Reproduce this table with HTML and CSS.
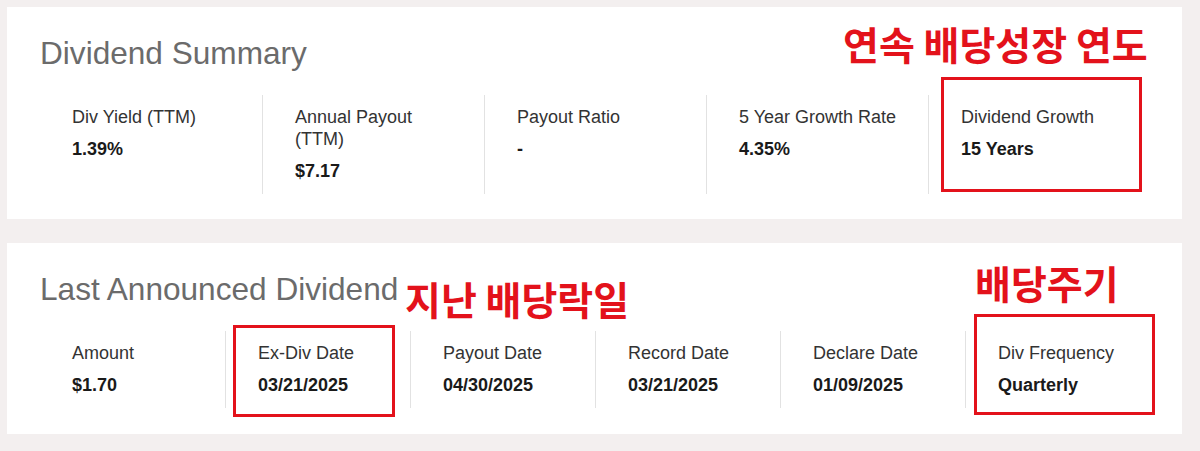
FILE: index.html
```html
<!DOCTYPE html>
<html lang="en">

<head>
    <meta charset="UTF-8">
    <meta name="viewport" content="width=device-width, initial-scale=1.0">
    <title>Dividend</title>
    <link rel="stylesheet" href="styles.css">
</head>

<body>

    <div class="card">
        <h2 class="card-title">Dividend Summary</h2>
        <div class="stats summary">
            <div class="stat">
                <div class="stat-label">Div Yield (TTM)</div>
                <div class="stat-value">1.39%</div>
            </div>
            <div class="stat">
                <div class="stat-label">Annual Payout (TTM)</div>
                <div class="stat-value">$7.17</div>
            </div>
            <div class="stat">
                <div class="stat-label">Payout Ratio</div>
                <div class="stat-value">-</div>
            </div>
            <div class="stat">
                <div class="stat-label">5 Year Growth Rate</div>
                <div class="stat-value">4.35%</div>
            </div>
            <div class="stat">
                <div class="stat-label">Dividend Growth</div>
                <div class="stat-value">15 Years</div>
            </div>
        </div>
        <span class="note note-growth">연속 배당성장 연도</span>
        <span class="mark mark-growth"></span>
    </div>

    <div class="card">
        <h2 class="card-title">Last Announced Dividend</h2>
        <div class="stats announced">
            <div class="stat">
                <div class="stat-label">Amount</div>
                <div class="stat-value">$1.70</div>
            </div>
            <div class="stat">
                <div class="stat-label">Ex-Div Date</div>
                <div class="stat-value">03/21/2025</div>
            </div>
            <div class="stat">
                <div class="stat-label">Payout Date</div>
                <div class="stat-value">04/30/2025</div>
            </div>
            <div class="stat">
                <div class="stat-label">Record Date</div>
                <div class="stat-value">03/21/2025</div>
            </div>
            <div class="stat">
                <div class="stat-label">Declare Date</div>
                <div class="stat-value">01/09/2025</div>
            </div>
            <div class="stat">
                <div class="stat-label">Div Frequency</div>
                <div class="stat-value">Quarterly</div>
            </div>
        </div>
        <span class="note note-exdiv">지난 배당락일</span>
        <span class="mark mark-exdiv"></span>
        <span class="note note-freq">배당주기</span>
        <span class="mark mark-freq"></span>
    </div>

</body>

</html>
```

FILE: styles.css
```css
body {
    margin: 0;
    padding: 7px 18px 16px 7px;
    background-color: #f3efef;
    font-family: "Liberation Sans", Arial, sans-serif;
}

.card {
    position: relative;
    background-color: #fff;
    padding: 28px 31px 25px 33px;
}

.card + .card {
    margin-top: 24px;
    padding-bottom: 26px;
}

.card-title {
    margin: 0 0 24px;
    font-size: 31.6px;
    font-weight: normal;
    line-height: 36px;
    color: #6b6b6b;
}

.stats {
    display: grid;
}

.summary {
    grid-template-columns: repeat(5, 222px);
}

.announced {
    grid-template-columns: repeat(6, 185px);
}

.stat {
    padding: 11px 24px 12px 32px;
}

.stat + .stat {
    border-left: 1px solid #e2e2e2;
}

.stat-label {
    font-size: 18px;
    line-height: 22px;
    color: #333;
}

.stat-value {
    margin-top: 10px;
    font-size: 18px;
    line-height: 22px;
    font-weight: bold;
    color: #1a1a1a;
}

/* red annotations drawn over the screenshot */
.note {
    position: absolute;
    font-family: "Noto Sans CJK KR", sans-serif;
    font-weight: bold;
    font-size: 39px;
    line-height: 1;
    color: #e3121b;
    white-space: nowrap;
}

.mark {
    position: absolute;
    box-sizing: border-box;
    border: 3px solid #e3121b;
}

.note-growth {
    left: 836px;
    top: 17px;
}

.mark-growth {
    left: 934px;
    top: 70px;
    width: 201px;
    height: 115px;
}

.note-exdiv {
    left: 398px;
    top: 36px;
}

.mark-exdiv {
    left: 226px;
    top: 82px;
    width: 162px;
    height: 92px;
}

.note-freq {
    left: 968px;
    top: 20px;
}

.mark-freq {
    left: 967px;
    top: 71px;
    width: 181px;
    height: 101px;
}
```
